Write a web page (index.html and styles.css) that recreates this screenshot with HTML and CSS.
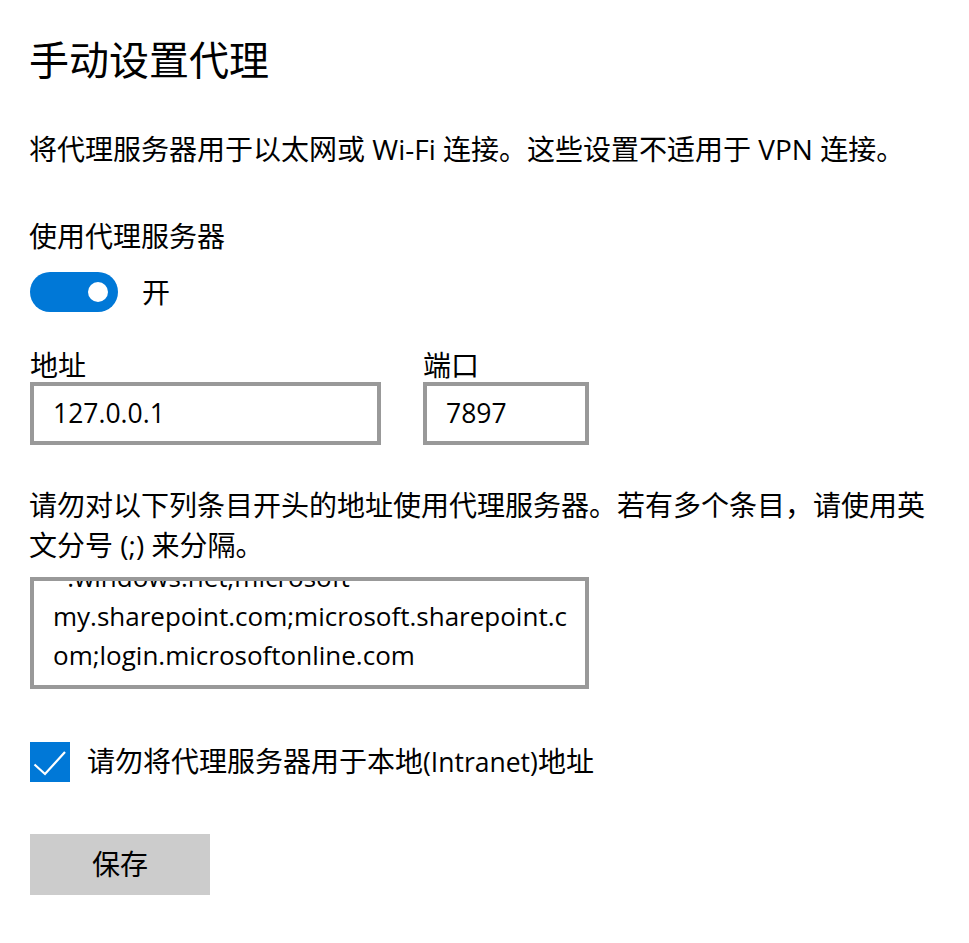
FILE: index.html
```html
<!DOCTYPE html>
<html lang="zh-CN">
<head>
<meta charset="utf-8">
<title>手动设置代理</title>
<link rel="stylesheet" href="styles.css">
</head>
<body>
<div class="page">
  <h1 class="title">手动设置代理</h1>
  <p class="desc">将代理服务器用于以太网或 Wi-Fi 连接。这些设置不适用于 VPN 连接。</p>
  <div class="label-use">使用代理服务器</div>
  <div class="toggle-row">
    <div class="toggle"><span class="knob"></span></div>
    <span class="toggle-text">开</span>
  </div>
  <div class="addr-row">
    <div class="field field-addr">
      <div class="field-label">地址</div>
      <div class="input">127.0.0.1</div>
    </div>
    <div class="field field-port">
      <div class="field-label">端口</div>
      <div class="input">7897</div>
    </div>
  </div>
  <p class="para">请勿对以下列条目开头的地址使用代理服务器。若有多个条目，请使用英<br>文分号 (;) 来分隔。</p>
  <div class="textarea">
    <div class="ta-content">
      <div class="ta-line">*.windows.net;microsoft-</div>
      <div class="ta-line">my.sharepoint.com;microsoft.sharepoint.c</div>
      <div class="ta-line">om;login.microsoftonline.com</div>
    </div>
  </div>
  <div class="check-row">
    <div class="checkbox">
      <svg width="40" height="40" viewBox="0 0 40 40"><polyline points="4.5,22.5 15,32 35,10" fill="none" stroke="#fff" stroke-width="2.2"/></svg>
    </div>
    <span class="check-text">请勿将代理服务器用于本地<span class="latin">(Intranet)</span>地址</span>
  </div>
  <div class="button">保存</div>
</div>
</body>
</html>
```
FILE: styles.css
```css
html, body {
  margin: 0;
  padding: 0;
  background: #ffffff;
}
body {
  font-family: "Open Sans", "Noto Sans CJK SC", sans-serif;
  color: #000000;
}
.page {
  padding: 32px 30px 40px 29px;
}
.title {
  margin: 0;
  font-size: 40px;
  line-height: 56px;
  font-weight: 400;
}
.desc {
  margin: 41px 0 0 0;
  font-size: 28px;
  line-height: 40px;
  white-space: nowrap;
}
.label-use {
  margin-top: 47px;
  font-size: 28px;
  line-height: 40px;
}
.toggle-row {
  margin-top: 16px;
  display: flex;
  align-items: center;
  gap: 24px;
  padding-left: 1px;
}
.toggle {
  width: 88px;
  height: 40px;
  border-radius: 20px;
  background: #0078d7;
  display: flex;
  align-items: center;
  justify-content: flex-end;
  padding-right: 10px;
  box-sizing: border-box;
}
.knob {
  width: 20px;
  height: 20px;
  border-radius: 50%;
  background: #ffffff;
}
.toggle-text {
  font-size: 28px;
  line-height: 40px;
}
.addr-row {
  margin-top: 38px;
  display: flex;
  gap: 42px;
  padding-left: 1px;
}
.field-label {
  font-size: 28px;
  line-height: 30px;
  margin-bottom: 2px;
}
.input {
  box-sizing: border-box;
  height: 63px;
  border: 4px solid #999999;
  padding: 0 19px;
  font-size: 26.5px;
  line-height: 54px;
}
.field-addr .input { width: 351px; }
.field-port .input { width: 166px; }
.para {
  margin: 40px 0 0 0;
  font-size: 28px;
  line-height: 40px;
  white-space: nowrap;
}
.textarea {
  margin-top: 12px;
  margin-left: 1px;
  box-sizing: border-box;
  width: 559px;
  height: 112px;
  border: 4px solid #999999;
  overflow: hidden;
  padding: 0 19px;
}
.ta-content {
  margin-top: -23px;
}
.ta-line {
  font-size: 26px;
  line-height: 39px;
  white-space: nowrap;
}
.check-row {
  margin-top: 52px;
  display: flex;
  align-items: center;
  gap: 17px;
  padding-left: 1px;
}
.checkbox {
  width: 40px;
  height: 40px;
  background: #0078d7;
  flex: none;
}
.checkbox svg {
  display: block;
}
.check-text {
  font-size: 28px;
  line-height: 40px;
}
.latin {
  font-size: 26.5px;
}
.button {
  margin-top: 52px;
  margin-left: 1px;
  width: 180px;
  height: 61px;
  background: #cccccc;
  font-size: 28px;
  line-height: 61px;
  text-align: center;
}
```
